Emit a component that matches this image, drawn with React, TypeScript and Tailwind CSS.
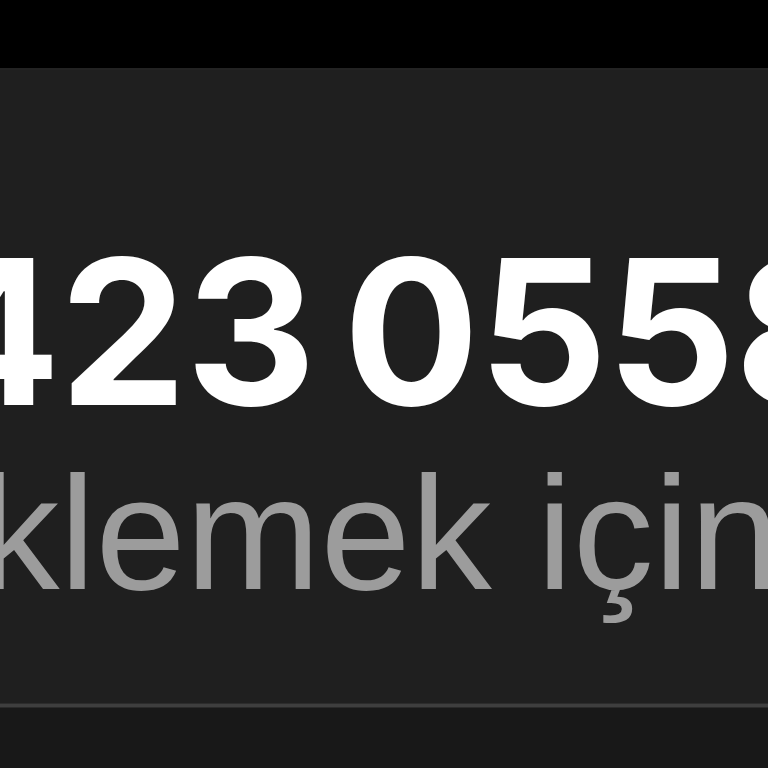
import React from "react";

export default function App() {
  return (
    <div className="w-[768px] h-[768px] bg-[#181818] overflow-hidden flex flex-col">
      <div className="h-[68px] shrink-0 bg-black" />
      <div className="h-[635px] shrink-0 bg-[#1f1f1f] border-t-[2px] border-[#232323] pt-[161px] flex flex-col">
        <div className="overflow-hidden">
          <div
            className="w-max flex items-baseline gap-[28px] whitespace-nowrap ml-[-633px] text-[202px] leading-none font-bold text-white tracking-[-1px]"
            style={{ fontFamily: "Inter, 'Liberation Sans', sans-serif" }}
          >
            <span>0850</span>
            <span>423</span>
            <span>0558</span>
          </div>
        </div>
        <div className="overflow-hidden mt-[19px] pb-[40px]">
          <div
            className="w-max whitespace-nowrap ml-[-778px] text-[162px] leading-none text-[#9c9c9c]"
            style={{ fontFamily: "'Liberation Sans', Arial, sans-serif" }}
          >
            Rehbere eklemek için dokunun
          </div>
        </div>
      </div>
      <div className="h-[1px] shrink-0 bg-[#2c2c2c]" />
      <div className="h-[3px] shrink-0 bg-[#3e3e3e]" />
      <div className="h-[1px] shrink-0 bg-[#2a2a2a]" />
      <div className="flex-1 bg-[#181818]" />
    </div>
  );
}
